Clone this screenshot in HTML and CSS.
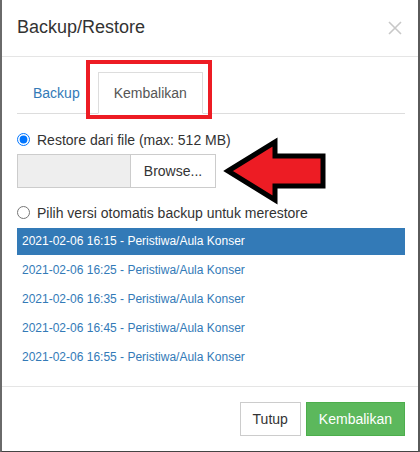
FILE: index.html
```html
<!DOCTYPE html>
<html lang="id">
<head>
<meta charset="utf-8">
<title>Backup/Restore</title>
<link rel="stylesheet" href="styles.css">
</head>
<body>
<div class="modal">
  <div class="modal-header">
    <h4 class="modal-title">Backup/Restore</h4>
    <svg class="close" width="14" height="14" viewBox="0 0 14 14"><path d="M1 1 L13 13 M13 1 L1 13" stroke="#c8c8c8" stroke-width="1.6" fill="none"/></svg>
  </div>
  <div class="modal-body">
    <div class="nav-tabs">
      <a class="tab">Backup</a>
      <a class="tab active">Kembalikan</a>
    </div>
    <label class="radio">
      <input type="radio" name="src" checked>
      <span>Restore dari file (max: 512 MB)</span>
    </label>
    <div class="file-input">
      <div class="file-name"></div>
      <div class="browse">Browse...</div>
    </div>
    <label class="radio radio-2">
      <input type="radio" name="src">
      <span>Pilih versi otomatis backup untuk merestore</span>
    </label>
    <ul class="versions">
      <li class="selected">2021-02-06 16:15 - Peristiwa/Aula Konser</li>
      <li>2021-02-06 16:25 - Peristiwa/Aula Konser</li>
      <li>2021-02-06 16:35 - Peristiwa/Aula Konser</li>
      <li>2021-02-06 16:45 - Peristiwa/Aula Konser</li>
      <li>2021-02-06 16:55 - Peristiwa/Aula Konser</li>
    </ul>
  </div>
  <div class="modal-footer">
    <button class="btn btn-default">Tutup</button>
    <button class="btn btn-success">Kembalikan</button>
  </div>
</div>
<svg class="annotation" width="420" height="452" viewBox="0 0 420 452">
  <rect x="88" y="62" width="122" height="55" fill="none" stroke="#ed1c24" stroke-width="4"/>
  <polygon points="228,171 275,142 275,156 323,156 323,186 275,186 275,200" fill="#ed1c24" stroke="#000" stroke-width="5" stroke-linejoin="miter" stroke-miterlimit="6"/>
</svg>
</body>
</html>
```
FILE: styles.css
```css
html, body {
  margin: 0;
  padding: 0;
}
body {
  background: #555;
  font-family: "Liberation Sans", Arial, sans-serif;
  font-size: 14px;
  line-height: 20px;
  color: #333;
  width: 420px;
  height: 452px;
  overflow: hidden;
  position: relative;
}
.modal {
  width: 420px;
  box-sizing: border-box;
  background: #fff;
  border-left: 2px solid #6a6a6a;
  border-right: 2px solid #5a5a5a;
  border-bottom: 2px solid #444;
}
.modal-header {
  display: flex;
  align-items: center;
  justify-content: space-between;
  padding: 15px 13px 15px 15px;
  border-bottom: 1px solid #e5e5e5;
}
.modal-title {
  margin: 0;
  font-size: 18px;
  font-weight: normal;
  line-height: 25.714px;
  color: #333;
}
.close {
  margin-right: 3px;
  display: block;
}
.modal-body {
  padding: 15px 13px 15px 15px;
}
.nav-tabs {
  display: flex;
  border-bottom: 1px solid #ddd;
}
.tab {
  display: block;
  padding: 10px 15px;
  line-height: 20px;
  margin-right: 2px;
  margin-bottom: -1px;
  border: 1px solid transparent;
  color: #337ab7;
}
.tab.active {
  color: #555;
  background: #fff;
  border-color: #ddd;
  border-bottom-color: transparent;
}
.radio {
  display: flex;
  align-items: center;
  height: 20px;
  margin-top: 16px;
  gap: 7px;
}
.radio input {
  margin: 0;
  width: 13px;
  height: 13px;
}
.radio-2 {
  margin-top: 15px;
}
.file-input {
  display: flex;
  margin-top: 4px;
  height: 34px;
}
.file-name {
  width: 113px;
  box-sizing: border-box;
  background: #eee;
  border: 1px solid #ccc;
  border-right: none;
}
.browse {
  width: 86px;
  box-sizing: border-box;
  border: 1px solid #ccc;
  background: #fff;
  display: flex;
  align-items: center;
  justify-content: center;
  color: #333;
}
.versions {
  list-style: none;
  margin: 5px 0 0;
  padding: 0;
}
.versions li {
  height: 27px;
  line-height: 27px;
  margin-bottom: 2px;
  padding-left: 5px;
  font-size: 12px;
  color: #337ab7;
}
.versions li:last-child {
  margin-bottom: 0;
}
.versions li.selected {
  background: #337ab7;
  color: #fff;
}
.modal-footer {
  display: flex;
  justify-content: flex-end;
  gap: 5px;
  padding: 15px 13px 15px 15px;
  border-top: 1px solid #e5e5e5;
}
.btn {
  font-family: inherit;
  font-size: 14px;
  line-height: 20px;
  padding: 6px 12px;
  border: 1px solid #ccc;
  border-radius: 0;
  background: #fff;
  color: #333;
  margin: 0;
}
.btn-success {
  background: #5cb85c;
  border-color: #4cae4c;
  color: #fff;
}
.annotation {
  position: absolute;
  left: 0;
  top: 0;
  pointer-events: none;
}
```
